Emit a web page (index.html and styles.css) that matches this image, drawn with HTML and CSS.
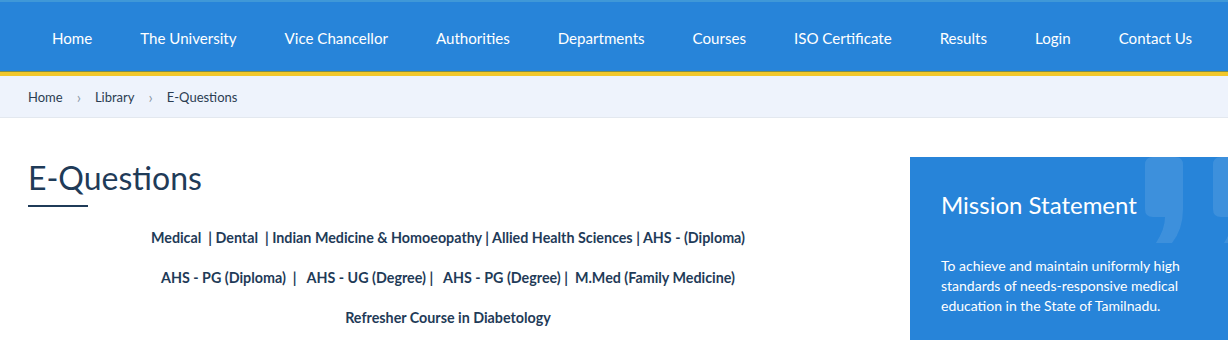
FILE: index.html
```html
<!DOCTYPE html>
<html lang="en">
<head>
	<meta charset="utf-8">
	<title>E-Questions</title>
	<link rel="stylesheet" href="styles.css">
</head>
<body>
<!-- Main menu -->
<header class="topbar">
	<nav class="menu">
		<a href="#">Home</a>
		<a href="#">The University</a>
		<a href="#">Vice Chancellor</a>
		<a href="#">Authorities</a>
		<a href="#">Departments</a>
		<a href="#">Courses</a>
		<a href="#">ISO Certificate</a>
		<a href="#">Results</a>
		<a href="#">Login</a>
		<a href="#">Contact Us</a>
	</nav>
</header>

<!-- Breadcrumb -->
<div class="crumbs">
	<a href="#">Home</a>
	<span class="sep">&rsaquo;</span>
	<a href="#">Library</a>
	<span class="sep">&rsaquo;</span>
	<span>E-Questions</span>
</div>

<div class="page">
	<main class="content">
		<h1 class="title">E-Questions</h1>
		<p class="links"><a href="#">Medical</a>&nbsp; | <a href="#">Dental</a>&nbsp; | <a href="#">Indian Medicine &amp; Homoeopathy</a> | <a href="#">Allied Health Sciences</a> | <a href="#">AHS - (Diploma)</a></p>
		<p class="links"><a href="#">AHS - PG (Diploma)</a>&nbsp; | &nbsp; <a href="#">AHS - UG (Degree)</a> | &nbsp; <a href="#">AHS - PG (Degree)</a> | &nbsp;<a href="#">M.Med (Family Medicine)</a></p>
		<p class="links"><a href="#">Refresher Course in Diabetology</a></p>
	</main>

	<aside class="mission">
		<svg class="quote" width="120" height="90" viewBox="0 0 120 90">
			<path d="M8 0 H30 Q38 0 38 8 V52 Q38 72 27 86 H11 Q20 72 20 60 H8 Q0 60 0 52 V8 Q0 0 8 0 Z"/>
			<path d="M76 0 H98 Q106 0 106 8 V52 Q106 72 95 86 H79 Q88 72 88 60 H76 Q68 60 68 52 V8 Q68 0 76 0 Z"/>
		</svg>
		<h2>Mission Statement</h2>
		<p>To achieve and maintain uniformly high standards of needs-responsive medical education in the State of Tamilnadu.</p>
	</aside>
</div>
</body>
</html>
```

FILE: styles.css
```css
	body {
		margin: 0;
		font-family: Lato, "Noto Sans", sans-serif;
		color: #1f3b58;
		background: #fff;
		overflow: hidden;
	}

	a {
		color: inherit;
		text-decoration: none;
	}

	/* top menu */
	.topbar {
		border-top: 2px solid #3f98d8;
		background: #2784d9;
		border-bottom: 4px solid #f2c72a;
		box-shadow: inset 0 -1px 0 #7f8f4a;
	}

	.menu {
		display: flex;
		height: 70px;
		align-items: center;
		padding: 2px 0 0 28px;
		box-sizing: border-box;
	}

	.menu a {
		color: #fff;
		font-size: 15.1px;
		padding: 0 24px;
	}

	/* breadcrumb */
	.crumbs {
		display: flex;
		align-items: center;
		gap: 13px;
		height: 41px;
		padding-left: 28px;
		background: #eef3fc;
		border-bottom: 1px solid #e3e8ef;
		font-size: 13px;
		color: #2b3d52;
	}

	.crumbs .sep {
		color: #8a96a4;
		font-size: 15px;
		margin: 0 1px;
	}

	/* page body */
	.page {
		display: flex;
		gap: 42px;
		padding-top: 41px;
	}

	.content {
		width: 840px;
		margin-left: 28px;
	}

	.title {
		margin: 0 0 22px;
		font-size: 32px;
		font-weight: 400;
		line-height: 1.2;
		padding-bottom: 10px;
		position: relative;
		color: #1f3b58;
	}

	.title::after {
		content: "";
		position: absolute;
		left: 0;
		bottom: 0;
		width: 60px;
		height: 2px;
		background: #1f3b58;
	}

	.links {
		margin: 0 0 23px;
		text-align: center;
		font-size: 14.3px;
		font-weight: 700;
		line-height: 17px;
	}

	.mission {
		position: relative;
		flex: 1;
		margin-top: -2px;
		height: 183px;
		box-sizing: border-box;
		padding: 33px 20px 0 31px;
		background: #2784d9;
		color: #fff;
		overflow: hidden;
	}

	.mission h2 {
		position: relative;
		margin: 0 0 37px;
		font-size: 24px;
		font-weight: 400;
	}

	.mission p {
		position: relative;
		margin: 0;
		font-size: 14px;
		line-height: 20px;
	}

	.quote {
		position: absolute;
		top: 0;
		left: 235px;
		fill: rgba(255, 255, 255, 0.1);
	}
```
